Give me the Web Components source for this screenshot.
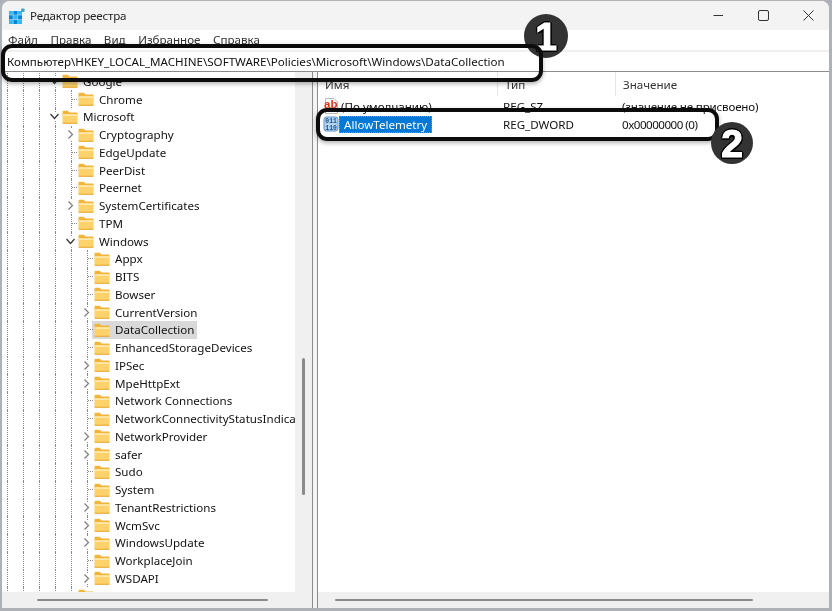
<!DOCTYPE html>
<html lang="ru">
<head>
<meta charset="utf-8">
<title>Редактор реестра</title>
<style>
  html, body { margin: 0; height: 100%; overflow: hidden; background: #aeb1b5; }
  /* the reference is a slightly soft, rescaled capture */
  body { font: 11.6px "Noto Sans", "Liberation Sans", sans-serif; color: #1a1a1a; filter: blur(.35px); }
</style>
</head>
<body>

<template id="folder-tpl">
  <svg width="16" height="14" viewBox="0 0 16 14">
    <path d="M0.5 2.2C0.5 1.3 1.1 0.8 2 0.8H5.6L7.6 2.6H14.4C15.2 2.6 15.6 3.1 15.6 3.8V6H0.5Z" fill="#f2b53c"/>
    <path d="M0.5 4.6H15.6V12.4C15.6 13.1 15.1 13.6 14.4 13.6H1.7C1 13.6 0.5 13.1 0.5 12.4Z" fill="#fdd26a"/>
    <path d="M0.5 4.2H15.6V6H0.5Z" fill="#ffe9a8"/>
    <path d="M0.5 12.7H15.6V13.2C15.6 13.5 15.1 13.8 14.4 13.8H1.7C1 13.8 0.5 13.5 0.5 13.2Z" fill="#e6a52c"/>
  </svg>
</template>

<script>
// ====================================================================
// ** Title bar **
// ====================================================================
class RegTitlebar extends HTMLElement {
    constructor() {
        super();
        this.attachShadow({ mode: 'open' });
        this.shadowRoot.innerHTML = `
            <style>
                :host { display: flex; align-items: center; height: 29px; background: #f3f3f3; padding-left: 7px; border-radius: 8px 8px 0 0; }
                .logo { margin-right: 5px; display: block; }
                .name { flex: 1; color: #222; letter-spacing: -.2px; }
                .btn { width: 45px; display: flex; justify-content: center; }
                .btn:last-child { margin-right: -2px; }
                .btn svg { display: block; }
            </style>
            <svg class="logo" width="16" height="16" viewBox="0 0 16 16">
                <rect x="0" y="3" width="13" height="13" fill="#0a84d6"/>
                <path d="M0 3H4V7H0ZM4.5 7.5H8.5V11.5H4.5ZM9 12H13V16H9ZM0 12H4V16H0ZM9 3H13V7H9Z" fill="#35b7f2"/>
                <path d="M0 7H13M0 11.5H13M4.2 3V16M8.7 3V16" stroke="#c5e6f8" stroke-width=".6"/>
                <rect x="12" y="0.5" width="3.6" height="3.6" rx="1" fill="#3fa9c9"/>
            </svg>
            <span class="name"><slot></slot></span>
            <div class="btn"><svg width="11" height="11"><path d="M0.5 5.5H10" stroke="#333"/></svg></div>
            <div class="btn"><svg width="11" height="11"><rect x="0.5" y="0.5" width="10" height="10" rx="1.5" fill="none" stroke="#333"/></svg></div>
            <div class="btn"><svg width="11" height="11"><path d="M0.5 0.5L10.5 10.5M10.5 0.5L0.5 10.5" stroke="#333"/></svg></div>
        `;
    }
}
customElements.define('reg-titlebar', RegTitlebar);

// ====================================================================
// ** Menu bar and address bar **
// ====================================================================
class RegMenubar extends HTMLElement {
    constructor() {
        super();
        this.attachShadow({ mode: 'open' });
        this.shadowRoot.innerHTML = `
            <style>
                :host { display: flex; align-items: center; gap: 12.5px; height: 20px; padding: 0 0 2px 6px; box-sizing: border-box; background: #fff; color: #333; }
            </style>
            <slot></slot>
        `;
    }
}
customElements.define('reg-menubar', RegMenubar);

class RegAddress extends HTMLElement {
    constructor() {
        super();
        this.attachShadow({ mode: 'open' });
        this.shadowRoot.innerHTML = `
            <style>
                :host { display: flex; align-items: center; height: 22px; box-sizing: border-box; padding-left: 5px; background: #fff; border-top: 2px solid #f0f0f0; border-bottom: 1px solid #8c8c8c; color: #111; white-space: nowrap; }
            </style>
            <slot></slot>
        `;
    }
}
customElements.define('reg-address', RegAddress);

// ====================================================================
// ** Tree row: guides, stem with chevron, folder and label **
// ====================================================================
class RegRow extends HTMLElement {
    constructor() {
        super();
        this.attachShadow({ mode: 'open' });
    }

    connectedCallback() {
        const level = Number(this.getAttribute('level'));
        const kind = this.getAttribute('kind') || 'leaf';
        const folder = document.getElementById('folder-tpl').innerHTML;
        const chevrons = {
            open: '<svg class="chev" width="11" height="9" viewBox="0 0 11 9"><path d="M1.5 2L5.5 6.5L9.5 2" fill="none" stroke="#333" stroke-width="1.2"/></svg>',
            closed: '<svg class="chev" width="11" height="11" viewBox="0 0 11 11"><path d="M3.5 1.5L7.5 5.5L3.5 9.5" fill="none" stroke="#7d7d7d" stroke-width="1.2"/></svg>',
            leaf: ''
        };

        this.shadowRoot.innerHTML = `
            <style>
                :host { display: flex; height: 17.76px; white-space: nowrap; color: #111; }
                :host([selected]) .item { background: #d9d9d9; }
                i { flex: none; width: 15px; border-left: 1px dotted #8a8a8a; }
                .stem { flex: none; width: 6px; border-left: 1px dotted #8a8a8a; position: relative; display: flex; align-items: center; }
                :host([kind="leaf"]) .stem, :host(:not([kind])) .stem {
                    background: repeating-linear-gradient(90deg, #8a8a8a 0 1px, transparent 1px 2px) center / 100% 1px no-repeat;
                }
                .chev { position: absolute; left: -7px; background: #fff; display: block; }
                .item { display: flex; align-items: center; gap: 5px; margin-left: -2px; padding: 0 3px 0 2px; }
                .item svg { display: block; flex: none; }
            </style>
            ${'<i></i>'.repeat(level)}
            <div class="stem">${chevrons[kind]}</div>
            <div class="item">${folder}<span><slot></slot></span></div>
        `;
    }
}
customElements.define('reg-row', RegRow);

// ====================================================================
// ** Panes **
// ====================================================================
class RegTree extends HTMLElement {
    constructor() {
        super();
        this.attachShadow({ mode: 'open' });
        this.shadowRoot.innerHTML = `
            <style>
                :host { display: grid; grid-template-columns: 1fr 17px; grid-template-rows: 1fr 16px; width: 310px; flex: none; background: #f0f0f0; }
                .rows { overflow: hidden; background: #fff; padding: .6px 0 0 5px; min-width: 0; }
                .v { display: flex; justify-content: center; padding-top: 286px; }
                .v b { display: block; width: 3px; height: 137px; background: #8a8a8a; border-radius: 2px; }
                .h { grid-column: 1 / 3; padding: 7px 0 0 35px; }
                .h b { display: block; width: 231px; height: 2px; background: #8a8a8a; border-radius: 2px; }
            </style>
            <div class="rows"><slot></slot></div>
            <div class="v"><b></b></div>
            <div class="h"><b></b></div>
        `;
    }
}
customElements.define('reg-tree', RegTree);

class RegHeader extends HTMLElement {
    constructor() {
        super();
        this.attachShadow({ mode: 'open' });
        this.shadowRoot.innerHTML = `
            <style>
                :host { display: grid; grid-template-columns: 180px 118px 1fr; height: 25px; color: #333; }
                div { display: flex; align-items: center; padding: 0 0 0 7px; height: 24px; border-right: 1px solid #e5e5e5; box-sizing: border-box; }
                div:last-child { border: 0; }
            </style>
            <div><slot name="name"></slot></div>
            <div><slot name="type"></slot></div>
            <div><slot name="value"></slot></div>
        `;
    }
}
customElements.define('reg-header', RegHeader);

class RegValue extends HTMLElement {
    constructor() {
        super();
        this.attachShadow({ mode: 'open' });
    }

    connectedCallback() {
        const isString = this.getAttribute('icon') === 'string';
        const icon = isString
            ? `<svg width="16" height="16" viewBox="0 0 16 16">
                   <path d="M2.5 .5H11L14.5 4V15.5H2.5Z" fill="#fff" stroke="#b9b9b9"/>
                   <text x="1" y="10" font-family="Liberation Sans" font-weight="700" font-size="11.5" fill="#d8391f">ab</text>
               </svg>`
            : `<svg width="16" height="16" viewBox="0 0 16 16">
                   <rect x="1" y="1" width="14" height="14" rx="2.5" fill="#b4d4f0" stroke="#5c93c8"/>
                   <text x="2.3" y="7" font-family="Liberation Mono" font-weight="700" font-size="6.4" fill="#14508f">011</text>
                   <text x="2.3" y="13.5" font-family="Liberation Mono" font-weight="700" font-size="6.4" fill="#14508f">110</text>
               </svg>`;

        this.shadowRoot.innerHTML = `
            <style>
                :host { display: grid; grid-template-columns: 180px 118px 1fr; height: 18px; white-space: nowrap; color: #111; }
                .name { display: flex; align-items: center; padding-left: 5px; }
                .name svg { display: block; flex: none; }
                .label { padding: 0 2px; height: 17px; line-height: 17px; }
                :host([selected]) .label { padding: 0 5px; background: #0078d7; color: #fff; outline: 1px dotted #c98a3c; outline-offset: -1px; }
                .type { padding-left: 5px; align-self: center; }
                .value { padding-left: 6px; align-self: center; }
            </style>
            <div class="name">${icon}<span class="label"><slot name="name"></slot></span></div>
            <div class="type"><slot name="type"></slot></div>
            <div class="value"><slot name="value"></slot></div>
        `;
    }
}
customElements.define('reg-value', RegValue);

class RegList extends HTMLElement {
    constructor() {
        super();
        this.attachShadow({ mode: 'open' });
        this.shadowRoot.innerHTML = `
            <style>
                :host { display: flex; flex-direction: column; flex: 1; min-width: 0; background: #fff; border-left: 1px solid #8c8c8c; }
                .body { flex: 1; }
                .h { height: 16px; box-sizing: border-box; background: #f0f0f0; padding: 7px 0 0 17px; }
                .h b { display: block; width: 418px; height: 2px; background: #8a8a8a; border-radius: 2px; }
            </style>
            <div class="body"><slot></slot></div>
            <div class="h"><b></b></div>
        `;
    }
}
customElements.define('reg-list', RegList);

class RegPanes extends HTMLElement {
    constructor() {
        super();
        this.attachShadow({ mode: 'open' });
        this.shadowRoot.innerHTML = `
            <style>
                :host { display: flex; flex: 1; min-height: 0; background: #f0f0f0; }
                .split { flex: none; width: 4px; border-left: 1px solid #8c8c8c; background: #f4f4f4; }
            </style>
            <slot name="tree"></slot>
            <div class="split"></div>
            <slot name="list"></slot>
        `;
    }
}
customElements.define('reg-panes', RegPanes);

// ====================================================================
// ** Window shell and the annotations drawn over it **
// ====================================================================
class RegWindow extends HTMLElement {
    constructor() {
        super();
        this.attachShadow({ mode: 'open' });
        this.shadowRoot.innerHTML = `
            <style>
                :host { display: flex; flex-direction: column; position: absolute; left: 2px; top: 1px; width: 827px; height: 607px; background: #fff; border-radius: 8px 8px 0 0; }
            </style>
            <slot></slot>
        `;
    }
}
customElements.define('reg-window', RegWindow);

class NoteFrame extends HTMLElement {
    constructor() {
        super();
        this.attachShadow({ mode: 'open' });
        this.shadowRoot.innerHTML = `
            <style>
                :host { display: block; position: absolute; box-sizing: border-box; border: 4px solid #0c0c0c; border-radius: 11px; box-shadow: 0 2px 4px rgba(0,0,0,.3); }
            </style>
        `;
    }
}
customElements.define('note-frame', NoteFrame);

class NoteBadge extends HTMLElement {
    constructor() {
        super();
        this.attachShadow({ mode: 'open' });
        this.shadowRoot.innerHTML = `
            <style>
                :host { display: flex; align-items: center; justify-content: center; position: absolute; border-radius: 50%; background: #333; color: #fff;
                    font: 700 39px/1 "Liberation Sans", sans-serif; -webkit-text-stroke: 1.2px #fff;
                    text-shadow: 2px 0 #000, -2px 0 #000, 0 2px #000, 0 -2px #000, 1.5px 1.5px #000, -1.5px 1.5px #000, 1.5px -1.5px #000, -1.5px -1.5px #000; }
            </style>
            <slot></slot>
        `;
    }
}
customElements.define('note-badge', NoteBadge);
</script>

<reg-window>
  <reg-titlebar>Редактор реестра</reg-titlebar>
  <reg-menubar><span>Файл</span><span>Правка</span><span>Вид</span><span>Избранное</span><span>Справка</span></reg-menubar>
  <reg-address>Компьютер\HKEY_LOCAL_MACHINE\SOFTWARE\Policies\Microsoft\Windows\DataCollection</reg-address>
  <reg-panes>
    <reg-tree slot="tree">
      <reg-row level="3" kind="open">Google</reg-row>
      <reg-row level="4">Chrome</reg-row>
      <reg-row level="3" kind="open">Microsoft</reg-row>
      <reg-row level="4" kind="closed">Cryptography</reg-row>
      <reg-row level="4">EdgeUpdate</reg-row>
      <reg-row level="4">PeerDist</reg-row>
      <reg-row level="4">Peernet</reg-row>
      <reg-row level="4" kind="closed">SystemCertificates</reg-row>
      <reg-row level="4">TPM</reg-row>
      <reg-row level="4" kind="open">Windows</reg-row>
      <reg-row level="5">Appx</reg-row>
      <reg-row level="5">BITS</reg-row>
      <reg-row level="5">Bowser</reg-row>
      <reg-row level="5" kind="closed">CurrentVersion</reg-row>
      <reg-row level="5" selected>DataCollection</reg-row>
      <reg-row level="5">EnhancedStorageDevices</reg-row>
      <reg-row level="5" kind="closed">IPSec</reg-row>
      <reg-row level="5" kind="closed">MpeHttpExt</reg-row>
      <reg-row level="5">Network Connections</reg-row>
      <reg-row level="5">NetworkConnectivityStatusIndicator</reg-row>
      <reg-row level="5" kind="closed">NetworkProvider</reg-row>
      <reg-row level="5" kind="closed">safer</reg-row>
      <reg-row level="5">Sudo</reg-row>
      <reg-row level="5">System</reg-row>
      <reg-row level="5" kind="closed">TenantRestrictions</reg-row>
      <reg-row level="5" kind="closed">WcmSvc</reg-row>
      <reg-row level="5" kind="closed">WindowsUpdate</reg-row>
      <reg-row level="5">WorkplaceJoin</reg-row>
      <reg-row level="5" kind="closed">WSDAPI</reg-row>
      <reg-row level="4"></reg-row>
    </reg-tree>
    <reg-list slot="list">
      <reg-header><span slot="name">Имя</span><span slot="type">Тип</span><span slot="value">Значение</span></reg-header>
      <reg-value icon="string"><span slot="name">(По умолчанию)</span><span slot="type">REG_SZ</span><span slot="value" style="letter-spacing:-.18px">(значение не присвоено)</span></reg-value>
      <reg-value icon="binary" selected><span slot="name">AllowTelemetry</span><span slot="type">REG_DWORD</span><span slot="value" style="letter-spacing:-.5px">0x00000000 (0)</span></reg-value>
    </reg-list>
  </reg-panes>
</reg-window>

<note-badge style="left:524px;top:14px;width:44px;height:44px">1</note-badge>
<note-frame style="left:1px;top:44px;width:542px;height:38px"></note-frame>
<note-frame style="left:316px;top:108px;width:403px;height:33px"></note-frame>
<note-badge style="left:711px;top:122px;width:42px;height:42px">2</note-badge>

</body>
</html>
